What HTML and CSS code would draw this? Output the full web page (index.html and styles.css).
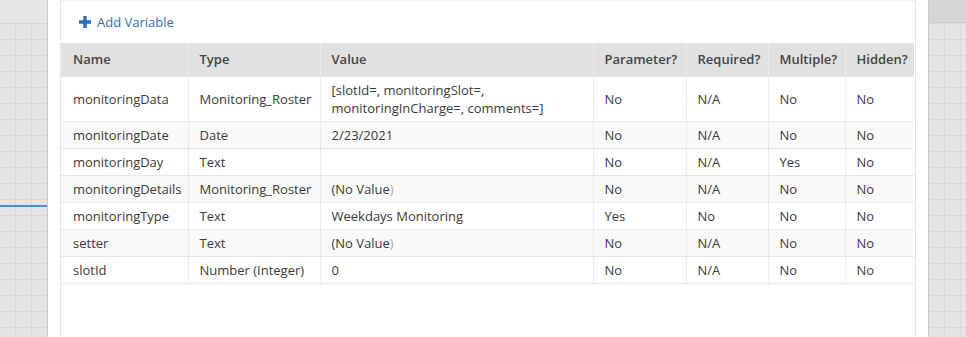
FILE: index.html
```html
<!DOCTYPE html>
<html>
<head>
<meta charset="utf-8">
<link rel="stylesheet" href="styles.css">
</head>
<body>
<div class="page">
  <div class="canvas canvas-left">
    <div class="canvas-top"></div>
    <div class="link-line"></div>
  </div>
  <div class="dialog">
    <div class="panel">
      <div class="toolbar">
        <a class="add-link" href="#">
          <svg class="plus" width="12" height="12" viewBox="0 0 12 12"><path d="M4.3 0h3.4v4.3H12v3.4H7.7V12H4.3V7.7H0V4.3h4.3z" fill="#2e6db4"/></svg>
          <span>Add Variable</span>
        </a>
      </div>
      <table class="vars">
        <colgroup>
          <col class="c-name"><col class="c-type"><col class="c-value"><col class="c-param"><col class="c-req"><col class="c-mult"><col class="c-hid">
        </colgroup>
        <thead>
          <tr><th>Name</th><th>Type</th><th>Value</th><th>Parameter?</th><th>Required?</th><th>Multiple?</th><th>Hidden?</th></tr>
        </thead>
        <tbody>
          <tr><td>monitoringData</td><td>Monitoring_Roster</td><td>[slotId=, monitoringSlot=,<br>monitoringInCharge=, comments=]</td><td>No</td><td>N/A</td><td>No</td><td>No</td></tr>
          <tr><td>monitoringDate</td><td>Date</td><td>2/23/2021</td><td>No</td><td>N/A</td><td>No</td><td>No</td></tr>
          <tr><td>monitoringDay</td><td>Text</td><td></td><td>No</td><td>N/A</td><td>Yes</td><td>No</td></tr>
          <tr><td>monitoringDetails</td><td>Monitoring_Roster</td><td>(No Value<span class="faint">)</span></td><td>No</td><td>N/A</td><td>No</td><td>No</td></tr>
          <tr><td>monitoringType</td><td>Text</td><td>Weekdays Monitoring</td><td>Yes</td><td>No</td><td>No</td><td>No</td></tr>
          <tr><td>setter</td><td>Text</td><td>(No Value<span class="faint">)</span></td><td>No</td><td>N/A</td><td>No</td><td>No</td></tr>
          <tr><td>slotId</td><td>Number (Integer)</td><td>0</td><td>No</td><td>N/A</td><td>No</td><td>No</td></tr>
        </tbody>
      </table>
    </div>
  </div>
  <div class="canvas canvas-right">
    <div class="canvas-bar"></div>
  </div>
</div>
</body>
</html>
```

FILE: styles.css
```css
html, body {
  margin: 0;
  padding: 0;
  height: 100%;
  overflow: hidden;
}
body {
  font-family: "Open Sans", "Noto Sans", sans-serif;
  font-size: 13px;
  color: #333;
  background: #e4e4e4;
}
.page {
  display: flex;
  height: 337px;
  overflow: hidden;
}
.canvas {
  position: relative;
  background-color: #e4e4e4;
  background-image:
    linear-gradient(to right, #d9d9d9 1px, transparent 1px),
    linear-gradient(to bottom, #d9d9d9 1px, transparent 1px);
  background-size: 16px 16px;
  background-position: -1px 7px;
}
.canvas-left {
  width: 47px;
  flex: none;
  border-right: 1px solid #c9c9c9;
}
.canvas-top {
  height: 23px;
  border-bottom: 1px solid #d4d4d4;
  background: #e6e6e6;
}
.link-line {
  position: absolute;
  left: 0;
  right: 0;
  top: 205px;
  height: 2px;
  background: #4a8fd4;
}
.canvas-right {
  flex: 1;
  border-left: 1px solid #c9c9c9;
}
.canvas-bar {
  height: 22px;
  background: #d6d6d6;
  border-bottom: 1px solid #cdcdcd;
}
.dialog {
  width: 880px;
  flex: none;
  background: #fff;
  padding: 0 12px;
  box-sizing: border-box;
}
.panel {
  border: 1px solid #e6e6e6;
  border-top-color: #efefef;
  border-bottom: none;
  height: 336px;
  box-sizing: border-box;
}
.toolbar {
  height: 42px;
  display: flex;
  align-items: center;
  padding-left: 18px;
}
.add-link {
  display: flex;
  align-items: center;
  gap: 6px;
  color: #2f6eaf;
  text-decoration: none;
  font-size: 13px;
}
.plus {
  display: block;
}
.vars {
  border-collapse: collapse;
  table-layout: fixed;
  width: 853px;
}
.c-name { width: 127px; }
.c-type { width: 132px; }
.c-value { width: 273px; }
.c-param { width: 93px; }
.c-req { width: 82px; }
.c-mult { width: 77px; }
.c-hid { width: 69px; }
.vars th {
  background: #e1e1e1;
  color: #444;
  font-weight: 600;
  text-align: left;
  padding: 7px 11px 8px;
  line-height: 18px;
  border-left: 1px solid #ebebeb;
  border-bottom: 1px solid #e6e6e6;
  white-space: nowrap;
}
.vars td {
  padding: 4px 11px;
  line-height: 18px;
  vertical-align: middle;
  border-left: 1px solid #ebebeb;
  border-bottom: 1px solid #e9e9e9;
  color: #3a3a3a;
  white-space: nowrap;
}
.vars th:first-child, .vars td:first-child {
  border-left: none;
  padding-left: 12px;
}
.vars tbody tr:nth-child(even) td {
  background: #f9f9f9;
}
.vars tbody tr:first-child td {
  height: 36px;
}
.faint {
  color: #aaa;
}
```
